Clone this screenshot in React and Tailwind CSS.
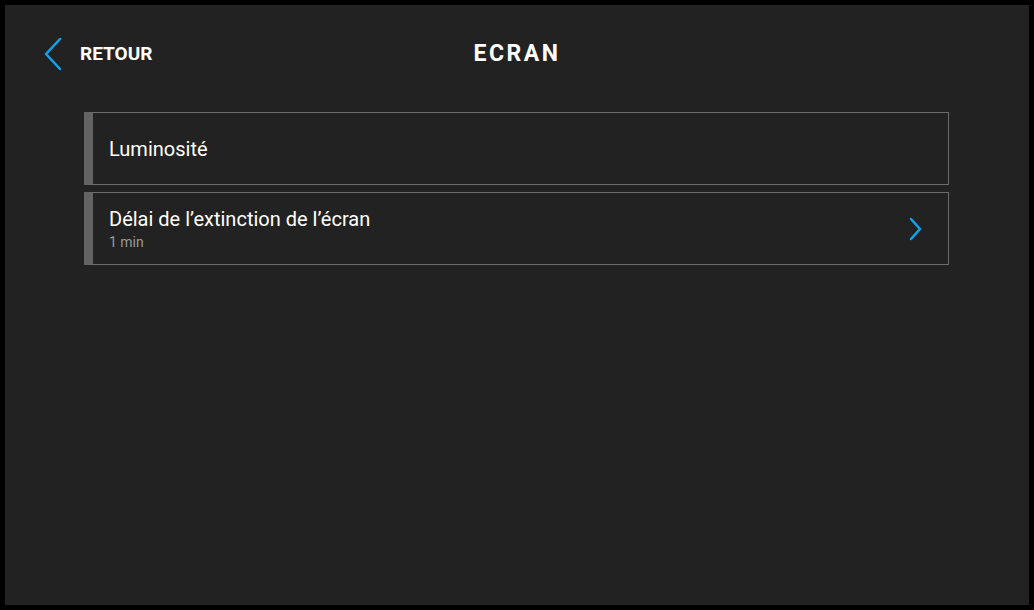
export default function App() {
  const rows = [
    { title: 'Luminosité' },
    { title: 'Délai de l’extinction de l’écran', sub: '1 min', chevron: true },
  ]
  return (
    <div className="w-[1034px] h-[610px] bg-black p-[5px]" style={{ fontFamily: 'Roboto, "Liberation Sans", sans-serif' }}>
      <div className="w-[1024px] h-[600px] bg-[#222222] flex flex-col">
        <div className="relative h-[96px] pt-[2px] flex items-center">
          <button className="flex items-center pl-[38px] gap-[13px] text-white">
            <svg width="24" height="34" viewBox="0 0 24 34" fill="none">
              <path d="M17 2 L3 17 L17 32" stroke="#0ea5f0" strokeWidth="2.5" strokeLinecap="round" strokeLinejoin="round" />
            </svg>
            <span className="text-[19px] font-bold">RETOUR</span>
          </button>
          <h1 className="absolute left-0 right-0 text-center text-white text-[23px] font-bold tracking-[2.5px] pointer-events-none">ECRAN</h1>
        </div>
        <div className="flex flex-col gap-[7px] pl-[79px] pr-[80px] pt-[11px]">
          {rows.map((r) => (
            <div key={r.title} className="h-[73px] flex items-center border border-[#6b6b6b] border-l-[9px] border-l-[#636363] pl-[16px] pr-[25px]">
              <div className="flex-1 flex flex-col">
                <span className="text-white text-[20px] leading-[24px]">{r.title}</span>
                {r.sub && <span className="text-[#9a9a9a] text-[14px] leading-[18px] mt-[2px]">{r.sub}</span>}
              </div>
              {r.chevron && (
                <svg width="14" height="24" viewBox="0 0 14 24" fill="none">
                  <path d="M2 2 L11 12 L2 22" stroke="#0ea5f0" strokeWidth="2.5" strokeLinecap="round" strokeLinejoin="round" />
                </svg>
              )}
            </div>
          ))}
        </div>
      </div>
    </div>
  )
}
